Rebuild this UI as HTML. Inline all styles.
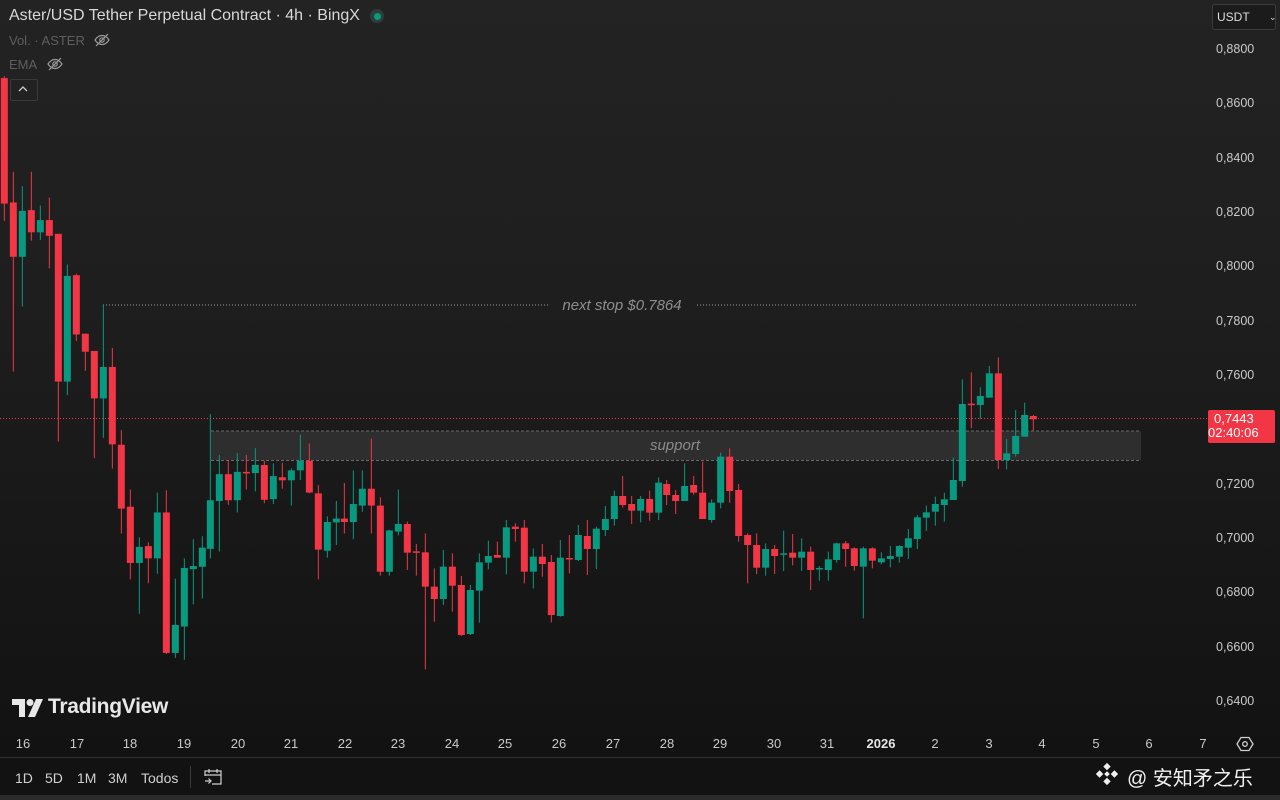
<!DOCTYPE html>
<html><head><meta charset="utf-8">
<style>
html,body{margin:0;padding:0;width:1280px;height:800px;overflow:hidden;background:#161616;font-family:"Liberation Sans","Noto Sans CJK SC",sans-serif}
#wrap{position:relative;width:1280px;height:800px;background:linear-gradient(#232323 0px,#1e1e1e 300px,#171717 560px,#121212 760px)}
.t{position:absolute;white-space:nowrap}
.ax{position:absolute;left:1216px;color:#c9c9c9;font-size:12.5px}
.tx{position:absolute;top:736px;color:#c9c9c9;font-size:13px;transform:translateX(-50%)}
.tb{position:absolute;top:770px;color:#d0d0d0;font-size:14px}
</style></head><body><div id="wrap">
<svg id="ch" width="1280" height="800" style="position:absolute;left:0;top:0">
 <rect x="211" y="431" width="930" height="29" fill="rgba(255,255,255,0.09)"/>
 <line x1="211" y1="431" x2="1141" y2="431" stroke="#6a6a6a" stroke-dasharray="3,2"/>
 <line x1="211" y1="460.5" x2="1141" y2="460.5" stroke="#6a6a6a" stroke-dasharray="3,2"/>
 <line x1="103" y1="305" x2="548" y2="305" stroke="#9a9a9a" stroke-dasharray="1,2"/>
 <line x1="697" y1="305" x2="1138" y2="305" stroke="#9a9a9a" stroke-dasharray="1,2"/>
 <line x1="0" y1="418.5" x2="1208" y2="418.5" stroke="#f23645" stroke-dasharray="1,2"/>
 <g id="cd"></g>
 <text x="622" y="310" fill="#8e8e8e" font-size="15" font-style="italic" text-anchor="middle" font-family="Liberation Sans">next stop $0.7864</text>
 <text x="675" y="450" fill="#8a8a8a" font-size="15" font-style="italic" text-anchor="middle" font-family="Liberation Sans">support</text>
</svg>
<div class="t" style="left:9px;top:7px;color:#d8d8d8;font-size:16px">Aster/USD Tether Perpetual Contract · 4h · BingX</div>
<div class="t" style="left:370px;top:9px;width:14px;height:14px;border-radius:50%;background:#2e3d38"></div>
<div class="t" style="left:374px;top:13px;width:7px;height:7px;border-radius:50%;background:#089981"></div>
<div class="t" style="left:9px;top:33px;color:#5e5e5e;font-size:13px">Vol. · ASTER</div>
<svg class="t" style="left:93px;top:32px" width="18" height="16" viewBox="0 0 18 16"><path d="M2 8c2-3 4.5-4.5 7-4.5S14 5 16 8c-2 3-4.5 4.5-7 4.5S4 11 2 8z" fill="none" stroke="#9a9a9a" stroke-width="1.2"/><circle cx="9" cy="8" r="2.2" fill="none" stroke="#9a9a9a" stroke-width="1.2"/><line x1="3" y1="14" x2="15" y2="2" stroke="#9a9a9a" stroke-width="1.2"/></svg>
<div class="t" style="left:9px;top:57px;color:#5e5e5e;font-size:13px">EMA</div>
<svg class="t" style="left:46px;top:56px" width="18" height="16" viewBox="0 0 18 16"><path d="M2 8c2-3 4.5-4.5 7-4.5S14 5 16 8c-2 3-4.5 4.5-7 4.5S4 11 2 8z" fill="none" stroke="#9a9a9a" stroke-width="1.2"/><circle cx="9" cy="8" r="2.2" fill="none" stroke="#9a9a9a" stroke-width="1.2"/><line x1="3" y1="14" x2="15" y2="2" stroke="#9a9a9a" stroke-width="1.2"/></svg>
<div class="t" style="left:10px;top:79px;width:26px;height:20px;border:1px solid #3a3a3a;border-radius:2px"></div>
<svg class="t" style="left:17px;top:85px" width="12" height="8"><path d="M2 6l4-4 4 4" fill="none" stroke="#ccc" stroke-width="1.3"/></svg>
<div class="t" style="left:1212px;top:4px;width:62px;height:24px;border:1px solid #3c3c3c;border-radius:3px;background:#1b1b1b;color:#ddd;font-size:12px;line-height:24px;text-indent:4px">USDT<span style="position:absolute;left:52px;font-size:9px">⌄</span></div>
<div class="ax" style="top:42px">0,8800</div><div class="ax" style="top:96px">0,8600</div><div class="ax" style="top:151px">0,8400</div><div class="ax" style="top:205px">0,8200</div><div class="ax" style="top:259px">0,8000</div><div class="ax" style="top:314px">0,7800</div><div class="ax" style="top:368px">0,7600</div><div class="ax" style="top:477px">0,7200</div><div class="ax" style="top:531px">0,7000</div><div class="ax" style="top:585px">0,6800</div><div class="ax" style="top:640px">0,6600</div><div class="ax" style="top:694px">0,6400</div>
<div class="t" style="left:1208px;top:410px;width:67px;height:31px;background:#f23645;border-radius:2px;color:#fff;font-size:13px;line-height:14px;padding-top:2px;text-indent:6px">0,7443<br>02:40:06</div>
<svg class="t" style="left:12px;top:699px" width="32" height="18" viewBox="0 0 32 18"><path d="M0 0h13v18H7V6H0z" fill="#e8e8e8"/><circle cx="18" cy="3.5" r="3.5" fill="#e8e8e8"/><path d="M24 0h7l-8 18h-7z" fill="#e8e8e8"/></svg>
<div class="t" style="left:48px;top:695px;color:#e8e8e8;font-size:21px;font-weight:bold;letter-spacing:-0.3px">TradingView</div>
<div class="tx" style="left:23px">16</div><div class="tx" style="left:77px">17</div><div class="tx" style="left:130px">18</div><div class="tx" style="left:184px">19</div><div class="tx" style="left:238px">20</div><div class="tx" style="left:291px">21</div><div class="tx" style="left:345px">22</div><div class="tx" style="left:398px">23</div><div class="tx" style="left:452px">24</div><div class="tx" style="left:505px">25</div><div class="tx" style="left:559px">26</div><div class="tx" style="left:613px">27</div><div class="tx" style="left:667px">28</div><div class="tx" style="left:720px">29</div><div class="tx" style="left:774px">30</div><div class="tx" style="left:827px">31</div><div class="tx" style="left:881px;font-weight:bold;color:#e6e6e6">2026</div><div class="tx" style="left:935px">2</div><div class="tx" style="left:989px">3</div><div class="tx" style="left:1042px">4</div><div class="tx" style="left:1096px">5</div><div class="tx" style="left:1149px">6</div><div class="tx" style="left:1203px">7</div>
<svg class="t" style="left:1236px;top:735px" width="18" height="18" viewBox="0 0 18 18"><path d="M5 2.5h8l4 6.5-4 6.5H5L1 9z" fill="none" stroke="#cfcfcf" stroke-width="1.3"/><circle cx="9" cy="9" r="2.3" fill="none" stroke="#cfcfcf" stroke-width="1.3"/></svg>
<div class="t" style="left:0;top:757px;width:1280px;height:1px;background:#2e2e2e"></div>
<div class="t" style="left:0;top:758px;width:1280px;height:37px;background:#121212"></div>
<div class="tb" style="left:15px">1D</div><div class="tb" style="left:45px">5D</div><div class="tb" style="left:77px">1M</div><div class="tb" style="left:108px">3M</div><div class="tb" style="left:141px">Todos</div>
<div class="t" style="left:190px;top:766px;width:1px;height:22px;background:#3a3a3a"></div>
<svg class="t" style="left:203px;top:767px" width="20" height="20" viewBox="0 0 20 20"><path d="M2 9V4h16v13h-9M2 8h16M6 2v4M14 2v4M2 14h6M5.5 11.5L8 14l-2.5 2.5" fill="none" stroke="#d0d0d0" stroke-width="1.2"/></svg>
<div class="t" style="left:0;top:795px;width:1280px;height:5px;background:#2b2b2b"></div>
<svg class="t" style="left:1094px;top:761px" width="26" height="26" viewBox="0 0 28 28"><g fill="#f0f0f0"><path d="M14 2l4 4-4 4-4-4z"/><path d="M14 18l4 4-4 4-4-4z"/><path d="M6 10l4 4-4 4-4-4z"/><path d="M22 10l4 4-4 4-4-4z"/><path d="M14 11l3 3-3 3-3-3z"/></g></svg>
<div class="t" style="left:1127px;top:762px;color:#f0f0f0;font-size:20px;font-family:'Liberation Sans','Noto Sans CJK SC',sans-serif">@ 安知矛之乐</div>
</div>
<script>
var G="#089981",R="#f23645",out=[];
function add(x,c,t,b,wt,wb){var col=c?G:R;out.push('<line x1="'+x+'" y1="'+wt+'" x2="'+x+'" y2="'+wb+'" stroke="'+col+'" stroke-width="1"/>');var h=Math.max(b-t,1.5);out.push('<rect x="'+(x-3.5)+'" y="'+t+'" width="7" height="'+h+'" fill="'+col+'"/>');}
var z5=[[13,0,-5,323,-10,368],[40,0,320,462,240,762],[67,1,342,462,277,592],[94,0,340,398,240,420],[121,1,366,398,328,418],[148,0,366,407,307,492],[175,0,402,788,402,945],[202,1,512,788,482,823],[229,0,510,665,506,682],[256,0,663,710,663,760],[283,0,708,832,708,988],[310,1,750,832,588,935],[337,0,750,952,700,1015],[364,0,953,1120,915,1185],[391,0,1115,1262,1070,1305],[418,1,1220,1262,1195,1395],[445,0,1218,1250,1208,1315],[472,1,1130,1250,1078,1290],[499,0,1130,1497,1072,1500],[526,1,1424,1497,1303,1510],[553,1,1275,1428,1250,1515],[580,1,1270,1278,1200,1370],[607,1,1222,1272,1192,1355],[631,1,1098,1225,873,1250],[658,1,1030,1100,980,1232],[685,0,1030,1098,993,1110],[712,1,1024,1098,975,1130],[739,0,1024,1028,980,1070],[766,1,1006,1027,962,1075],[793,0,1006,1097,995,1106],[820,1,1035,1095,1002,1108],[847,0,1038,1046,1000,1068],[874,1,1020,1046,1015,1112],[901,1,995,1020,927,1045],[928,0,995,1078,950,1080],[955,0,1080,1227,1058,1305],[982,1,1155,1230,1140,1248],[1009,1,1146,1156,1100,1215],[1033,0,1146,1155,1053,1185],[1060,1,1108,1155,1020,1200],[1087,1,1068,1112,1020,1128],[1114,0,1068,1112,937,1185],[1141,0,1112,1285,1090,1295],[1168,1,1177,1285,1175,1295],[1195,1,1160,1180,1070,1190]];
z5.forEach(function(d){add(d[0]/3,d[1],80+d[2]/2.613,80+d[3]/2.613,80+d[4]/2.613,80+d[5]/2.613);});
var z6=[[22,0,312,398,305,450],[49,0,394,397,372,467],[76,0,397,500,340,748],[103,0,500,537,445,605],[130,1,440,537,390,555],[157,0,440,497,400,575],[184,0,495,645,468,648],[211,1,510,642,495,645],[238,1,427,512,400,608],[265,1,408,428,362,448],[292,0,405,413,365,413],[319,1,322,413,300,463],[346,0,320,327,310,365],[373,0,323,455,300,490],[400,1,410,455,385,505],[427,0,410,432,372,470],[454,0,426,585,405,607],[481,1,413,588,360,590],[508,0,414,417,345,460],[535,1,345,420,315,423],[562,0,348,387,300,465],[589,1,326,387,320,447],[616,1,297,330,258,348],[643,1,228,297,212,317],[668,0,228,255,168,263],[695,0,252,272,228,312],[722,1,237,272,228,307],[749,0,237,278,212,302],[776,1,188,278,172,300],[800,0,192,225,180,255],[827,0,225,243,210,282],[854,1,198,243,130,243],[881,0,195,218,168,224],[908,0,218,297,125,297],[935,1,248,300,238,308],[962,1,110,248,98,265],[989,0,110,213,85,248],[1016,0,210,348,192,365],[1043,0,345,375,340,490],[1070,0,375,443,340,462],[1097,1,387,443,370,467],[1124,0,387,408,375,462],[1151,1,400,403,332,453],[1178,0,398,413,342,436],[1205,1,395,413,355,453],[1232,0,395,450,380,510]];
z6.forEach(function(d){add(400+d[0]/3,d[1],420+d[2]/3,420+d[3]/3,420+d[4]/3,420+d[5]/3);});
var z7=[[58,1,654,657,648,692],[85,1,628,660,605,692],[110,1,580,630,578,638],[137,0,580,597,573,650],[163,0,595,648,592,662],[190,1,595,650,590,805],[217,0,595,632,592,655],[244,1,625,637,607,643],[271,1,618,627,588,652],[298,1,588,620,585,638],[325,1,565,593,537,627],[352,1,502,567,495,597],[379,1,487,503,467,543],[406,1,462,485,440,527],[433,1,448,465,428,515],[460,1,390,450,322,450],[487,1,162,393,88,410],[514,0,161,164,67,235],[541,1,138,165,112,207],[568,1,70,143,48,143],[595,0,70,330,22,357],[620,1,310,330,267,358],[647,1,258,312,180,320],[674,1,195,260,158,260],[700,0,198,208,195,243]];
z7.forEach(function(d){add(800+d[0]/3,d[1],350+d[2]/3,350+d[3]/3,350+d[4]/3,350+d[5]/3);});
document.getElementById("cd").innerHTML=out.join("");
</script>
</body></html>
